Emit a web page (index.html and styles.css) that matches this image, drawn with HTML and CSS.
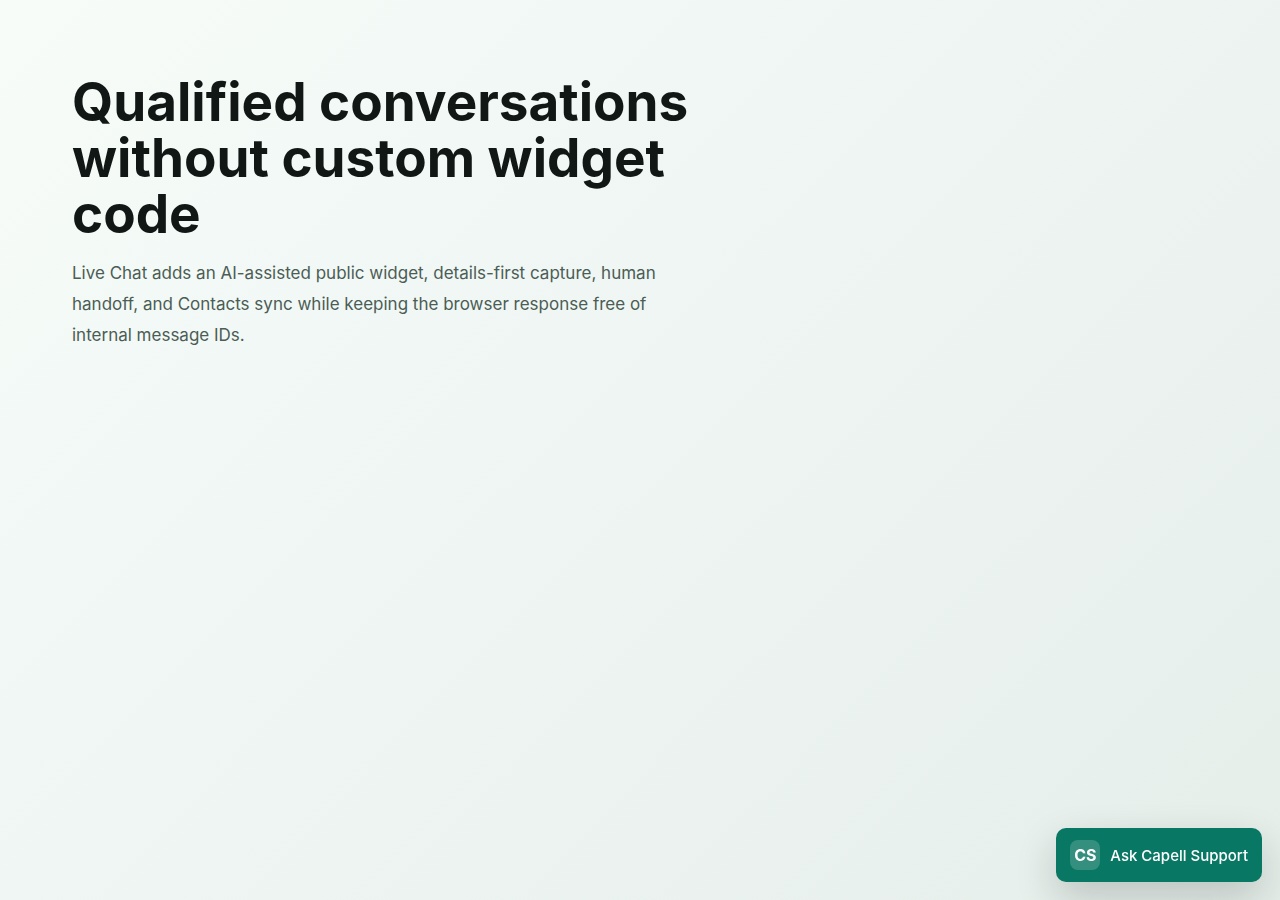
FILE: index.html
```html
<!DOCTYPE html>
<html lang="en">
<head>
  <meta charset="UTF-8">
  <meta name="viewport" content="width=device-width, initial-scale=1">
  <title>Live Chat</title>
  <link rel="stylesheet" href="styles.css">
</head>
<body>
  <main class="page">
    <section class="intro">
      <h1>Qualified conversations without custom widget code</h1>
      <p>Live Chat adds an AI-assisted public widget, details-first capture, human handoff, and Contacts sync while keeping the browser response free of internal message IDs.</p>
    </section>
  </main>

  <button type="button" class="chat-launcher">
    <span class="chat-avatar">CS</span>
    <span>Ask Capell Support</span>
  </button>
</body>
</html>
```
FILE: styles.css
```css
* {
  box-sizing: border-box;
}
body {
  margin: 0;
  min-height: 100vh;
  font-family: Inter, sans-serif;
  color: #111715;
  background: linear-gradient(135deg, #f7fcf8 0%, #eef5f3 48%, #e6eeea 100%);
}
.page {
  padding: 74px 72px;
}
.intro {
  max-width: 620px;
}
h1 {
  margin: 0;
  font-size: 53px;
  line-height: 56px;
  font-weight: 700;
}
p {
  margin: 16px 0 0;
  font-size: 17px;
  line-height: 31px;
  color: #4b5d55;
}
.chat-launcher {
  position: fixed;
  right: 18px;
  bottom: 18px;
  display: flex;
  align-items: center;
  gap: 10px;
  min-height: 54px;
  padding: 12px 14px;
  border: 0;
  border-radius: 10px;
  background: #087763;
  color: white;
  font-family: inherit;
  font-size: 15px;
  font-weight: 500;
  cursor: pointer;
  box-shadow: 0 16px 40px rgba(16, 24, 20, 0.2);
}
.chat-avatar {
  display: grid;
  place-items: center;
  width: 30px;
  height: 30px;
  border-radius: 8px;
  background: rgba(255, 255, 255, 0.18);
  font-size: 16px;
  font-weight: 700;
}
```
